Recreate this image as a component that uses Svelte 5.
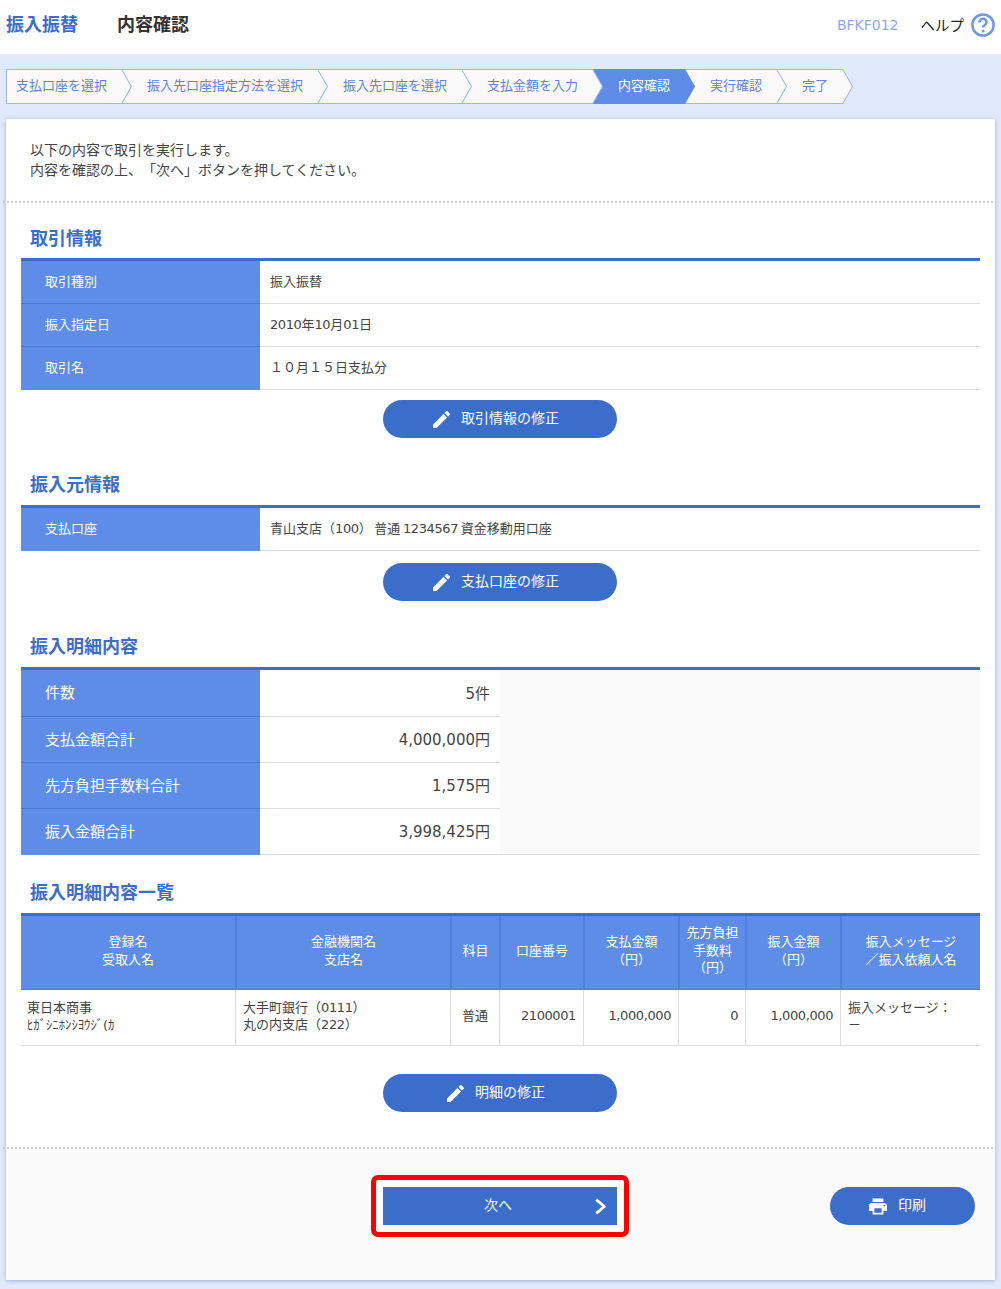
<script>
  const steps = [
    { label: '支払口座を選択' },
    { label: '振入先口座指定方法を選択' },
    { label: '振入先口座を選択' },
    { label: '支払金額を入力' },
    { label: '内容確認', active: true },
    { label: '実行確認' },
    { label: '完了' }
  ];
  const summary = [
    ['件数', '5件'],
    ['支払金額合計', '4,000,000円'],
    ['先方負担手数料合計', '1,575円'],
    ['振入金額合計', '3,998,425円']
  ];
  const pencil = 'M3 17.25V21h3.75L17.81 9.94l-3.75-3.75L3 17.25zM20.71 7.04a1 1 0 0 0 0-1.41l-2.34-2.34a1 1 0 0 0-1.41 0l-1.83 1.83 3.75 3.75 1.83-1.83z';
</script>

{#snippet editButton(label)}
  <div class="btn-row">
    <button class="btn" type="button">
      <svg class="pencil" viewBox="3 3 18 18" aria-hidden="true"><path d={pencil} /></svg>
      <span class="lbl">{label}</span>
    </button>
  </div>
{/snippet}

<header class="top">
  <div class="titles">
    <span class="t-main">振入振替</span>
    <span class="t-sub">内容確認</span>
  </div>
  <div class="tools">
    <span class="code">BFKF012</span>
    <span class="help">ヘルプ</span>
    <svg class="q" viewBox="0 0 24 24" aria-hidden="true">
      <circle cx="12" cy="12" r="10.6" fill="none" stroke="#6f98ea" stroke-width="2.5" />
      <path d="M8.4 9.4a3.6 3.6 0 0 1 7.2 0c0 2.6-3.5 2.6-3.5 5.2" fill="none" stroke="#6f98ea" stroke-width="2.5" />
      <circle cx="12.1" cy="18" r="1.5" fill="#6f98ea" />
    </svg>
  </div>
</header>

<nav class="band">
  <ol class="steps">
    {#each steps as s, i}
      <li class="step" class:active={s.active} style="z-index:{steps.length - i}"><span>{s.label}</span></li>
    {/each}
  </ol>
</nav>

<main class="card">
  <p class="intro">以下の内容で取引を実行します。<br />内容を確認の上、「次へ」ボタンを押してください。</p>
  <hr class="dots" />

  <section class="sec first">
    <h2>取引情報</h2>
    <table class="kv">
      <tbody>
        <tr><th>取引種別</th><td>振入振替</td></tr>
        <tr><th>振入指定日</th><td><span class="d">2010</span>年<span class="d">10</span>月<span class="d">01</span>日</td></tr>
        <tr><th>取引名</th><td>１０月１５日支払分</td></tr>
      </tbody>
    </table>
    {@render editButton('取引情報の修正')}
  </section>

  <section class="sec second">
    <h2>振入元情報</h2>
    <table class="kv">
      <tbody>
        <tr><th>支払口座</th><td class="acct">青山支店（<span class="d">100</span>） 普通 <span class="d">1234567</span> 資金移動用口座</td></tr>
      </tbody>
    </table>
    <div class="gap12">{@render editButton('支払口座の修正')}</div>
  </section>

  <section class="sec">
    <h2>振入明細内容</h2>
    <table class="sum">
      <colgroup><col class="c1" /><col class="c2" /><col /></colgroup>
      <tbody>
        {#each summary as row, i}
          <tr>
            <th>{row[0]}</th>
            <td>{row[1]}</td>
            {#if i === 0}<td class="blank" rowspan="4"></td>{/if}
          </tr>
        {/each}
      </tbody>
    </table>
  </section>

  <section class="sec list-sec">
    <h2>振入明細内容一覧</h2>
    <table class="list">
      <colgroup>
        <col class="l1" /><col class="l2" /><col class="l3" /><col class="l4" />
        <col class="l5" /><col class="l6" /><col class="l5" /><col />
      </colgroup>
      <thead>
        <tr>
          <th>登録名<br />受取人名</th>
          <th>金融機関名<br />支店名</th>
          <th>科目</th>
          <th>口座番号</th>
          <th>支払金額<br />（円）</th>
          <th>先方負担<br />手数料<br />（円）</th>
          <th>振入金額<br />（円）</th>
          <th>振入メッセージ<br />／振入依頼人名</th>
        </tr>
      </thead>
      <tbody>
        <tr>
          <td>東日本商事<br /><span class="kana">ﾋｶﾞｼﾆﾎﾝｼﾖｳｼﾞ(ｶ</span></td>
          <td>大手町銀行（<span class="d">0111</span>）<br />丸の内支店（<span class="d">222</span>）</td>
          <td class="ctr">普通</td>
          <td class="num">2100001</td>
          <td class="num">1,000,000</td>
          <td class="num">0</td>
          <td class="num">1,000,000</td>
          <td>振入メッセージ：<br />－</td>
        </tr>
      </tbody>
    </table>
    <div class="gap28">{@render editButton('明細の修正')}</div>
  </section>

  <hr class="dots end" />

  <footer class="foot">
    <div></div>
    <div class="hilite">
      <button class="next" type="button">
        <span class="lbl">次へ</span>
        <svg class="chev" viewBox="0 0 12 16" aria-hidden="true"><path d="M2 1.5 9.5 8 2 14.5" fill="none" stroke="#fff" stroke-width="2.6" /></svg>
      </button>
    </div>
    <button class="print" type="button">
      <svg class="printer" viewBox="2 3 20 18" aria-hidden="true"><path d="M19 8H5c-1.66 0-3 1.34-3 3v6h4v4h12v-4h4v-6c0-1.66-1.34-3-3-3zm-3 11H8v-5h8v5zm3-7c-.55 0-1-.45-1-1s.45-1 1-1 1 .45 1 1-.45 1-1 1zm-1-9H6v4h12V3z" /></svg>
      <span class="lbl">印刷</span>
    </button>
  </footer>
</main>

<style>
  :global(body) {
    margin: 0;
    background: #e0eafc;
    font-family: "DejaVu Sans", "Noto Sans CJK JP", sans-serif;
    color: #444;
    text-spacing-trim: space-all;
  }
  .top {
    height: 54px;
    background: #fff;
    display: flex;
    align-items: center;
    justify-content: space-between;
    padding: 0 6px;
    box-sizing: border-box;
  }
  .titles { display: flex; gap: 39px; font-size: 18px; font-weight: 700; margin-top: -8px; }
  .t-main { color: #3b6ecb; }
  .t-sub { color: #333; }
  .tools { display: flex; align-items: center; margin-top: -5px; }
  .code { font-size: 14px; color: #8fa9e8; margin-right: 22px; }
  .help { font-size: 14.5px; color: #222; margin-right: 7px; }
  .q { width: 24px; height: 24px; }

  .band { height: 65px; box-sizing: border-box; padding: 15px 0 0 6px; }
  .steps { list-style: none; display: flex; margin: 0; padding: 0; }
  .step {
    position: relative;
    height: 35px;
    box-sizing: border-box;
    display: flex;
    align-items: center;
    padding: 0 25px 4px;
    margin-left: -10px;
    font-size: 13px;
    color: #5e83d6;
  }
  .step:first-child { margin-left: 0; padding-left: 10px; }
  .step span { position: relative; z-index: 1; }
  .step::before, .step::after { content: ""; position: absolute; inset: 0; }
  .step::before {
    background: #9db8ee;
    clip-path: polygon(0 0, calc(100% - 10px) 0, 100% 50%, calc(100% - 10px) 100%, 0 100%);
  }
  .step::after {
    background: #fafafa;
    clip-path: polygon(0 1px, calc(100% - 10.6px) 1px, calc(100% - 1.2px) 50%, calc(100% - 10.6px) calc(100% - 1px), 0 calc(100% - 1px));
  }
  .step:first-child::after { left: 1px; }
  .step.active { color: #fff; }
  .step.active::before, .step.active::after { background: #5d8de6; }

  .card {
    margin: 0 6px 9px;
    background: #fff;
    box-shadow: 0 1px 4px rgba(40, 60, 120, 0.35);
  }
  .intro { margin: 0; padding: 21px 0 0 24px; font-size: 14px; line-height: 20px; }
  .dots {
    border: 0;
    border-top: 2px dotted #cfcfcf;
    margin: 21px 2px 0 -3px;
    height: 0;
  }
  .dots.end { margin-top: 35px; }

  .sec { padding: 0 15px; margin-top: 33px; }
  .sec.first { margin-top: 23px; }
  .sec.second { margin-top: 34px; }
  .sec.list-sec { margin-top: 25px; }
  h2 {
    margin: 0 0 7px 9px;
    font-size: 18px;
    line-height: 26px;
    font-weight: 700;
    color: #3b6ecb;
  }
  .first h2 { margin-bottom: 6px; }
  table {
    width: 100%;
    border-collapse: separate;
    border-spacing: 0;
    table-layout: fixed;
    border-top: 3px solid #3b6ecb;
  }
  .d { letter-spacing: -0.4px; }
  .kv th, .sum th {
    box-sizing: border-box;
    background: #5d8de6;
    color: #fff;
    font-weight: 400;
    text-align: left;
    padding: 0 0 0 24px;
    border-bottom: 1px solid #4a78cf;
  }
  .kv th { width: 239px; }
  .kv th, .kv td { height: 43px; font-size: 13px; box-sizing: border-box; padding-bottom: 4px; }
  .kv td {
    padding-left: 10px;
    border-bottom: 1px solid #ddd;
  }
  .kv td.acct { word-spacing: -1.5px; }
  .kv tr:last-child th, .sum tr:last-child th { border-bottom: 0; }

  .c1 { width: 239px; }
  .c2 { width: 240px; }
  .sum th, .sum td { height: 46px; font-size: 15px; box-sizing: border-box; padding-bottom: 3px; }
  .sum tr:first-child th, .sum tr:first-child td { height: 47px; }
  .sum td { text-align: right; padding-right: 10px; border-bottom: 1px solid #ddd; }
  .sum td.blank { background: #fafafa; padding: 0; }

  .list { font-size: 13px; line-height: 17.5px; }
  .l1 { width: 214px; }
  .l2 { width: 215px; }
  .l3 { width: 49px; }
  .l4 { width: 84px; }
  .l5 { width: 95px; }
  .l6 { width: 67px; }
  .list th {
    height: 74px;
    box-sizing: border-box;
    background: #5d8de6;
    color: #fff;
    font-weight: 400;
    padding: 0 0 4px;
    border-bottom: 1px solid #4a78cf;
    border-left: 2px solid #4f7fd8;
  }
  .list th:first-child { border-left: 0; }
  .list td {
    height: 56px;
    box-sizing: border-box;
    padding: 0 7px 3px;
    border-bottom: 1px solid #ddd;
    border-left: 1px solid #ddd;
  }
  .list td:first-child { border-left: 0; padding-left: 6px; }
  .list td.ctr { text-align: center; padding: 0 0 3px; }
  .list td.num { text-align: right; letter-spacing: -0.4px; }
  .kana { font-size: 12.7px; }

  .btn-row { display: flex; justify-content: center; margin-top: 10px; padding-right: 1px; }
  .gap12 .btn-row { margin-top: 12px; }
  .gap28 .btn-row { margin-top: 28px; }
  .btn, .print, .next {
    font: inherit;
    font-size: 14px;
    color: #fff;
    background: #3b6ecb;
    border: 0;
    padding: 0;
    height: 38px;
    display: flex;
    align-items: center;
    justify-content: center;
    box-sizing: border-box;
  }
  .lbl { margin-top: -4px; }
  .btn { width: 234px; border-radius: 19px; gap: 11px; padding-right: 8px; }
  .pencil { width: 17px; height: 17px; fill: #fff; }

  .foot {
    background: #fafafa;
    display: grid;
    grid-template-columns: 1fr auto 1fr;
    align-items: center;
    padding: 26px 20px 43px;
  }
  .hilite {
    background: #fff;
    border: 5px solid #f00;
    border-radius: 7px;
    padding: 7px;
    margin-left: -1px;
  }
  .next { width: 234px; position: relative; padding-right: 4px; }
  .next .lbl { margin-top: -5px; }
  .chev { position: absolute; right: 10px; top: 11px; width: 13px; height: 17px; }
  .print {
    justify-self: end;
    width: 145px;
    border-radius: 19px;
    gap: 11px;
    padding-right: 10px;
  }
  .printer { width: 18px; height: 17px; fill: #fff; }
</style>
